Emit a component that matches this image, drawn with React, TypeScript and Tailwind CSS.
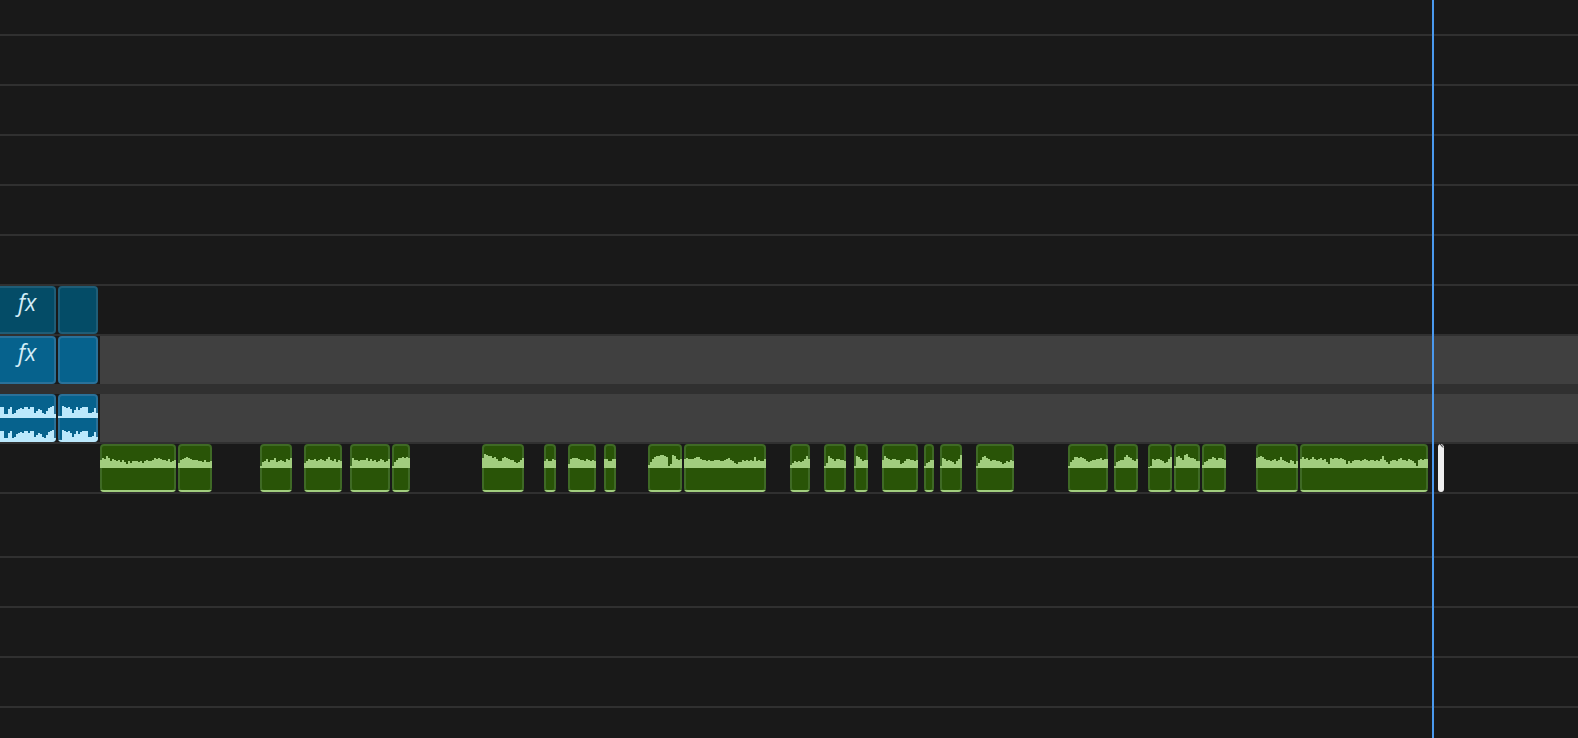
import clsx from "clsx";

type Clip = { start: number; end: number; wave?: string; fx?: boolean };
type Tone = "teal" | "blue" | "green";

// wave: one hex digit per 2px column, the digit is the column height
const VIDEO_CLIPS: Clip[] = [
  { start: 0, end: 56, fx: true },
  { start: 58, end: 98 },
];

const DIALOG_CLIPS: Clip[] = [
  { start: 0, end: 56, wave: "bb449b4589a9bb9bb5798547abc4" },
  { start: 58, end: 98, wave: "22cbab958b8abbb556a5" },
];

const MUSIC_CLIPS: Clip[] = [
  { start: 100, end: 176, wave: "8a9ca7987868647577767578778a9a98879678" },
  { start: 178, end: 212, wave: "589aba98887768667" },
  { start: 260, end: 292, wave: "2679688a6787698a" },
  { start: 304, end: 342, wave: "579889789879b879687" },
  { start: 350, end: 390, wave: "2a887888a79786798679" },
  { start: 392, end: 410, wave: "268aababa" },
  { start: 482, end: 524, wave: "aedccab977aba9886568a" },
  { start: 544, end: 556, wave: "797798" },
  { start: 568, end: 596, wave: "49aaa988798787" },
  { start: 604, end: 616, wave: "997799" },
  { start: 648, end: 682, wave: "369bccddcb24dc989" },
  { start: 684, end: 766, wave: "9a999abb98878778887789a875466878787b78779" },
  { start: 790, end: 810, wave: "35767679c9" },
  { start: 824, end: 846, wave: "25ca9799887" },
  { start: 854, end: 868, wave: "2cb9788" },
  { start: 882, end: 918, wave: "8ca989988457998878" },
  { start: 924, end: 934, wave: "25688" },
  { start: 940, end: 962, wave: "2a97876479d" },
  { start: 976, end: 1014, wave: "258bca9788776457687" },
  { start: 1068, end: 1108, wave: "268bbaba97678899a899" },
  { start: 1114, end: 1138, wave: "26788bdba879" },
  { start: 1148, end: 1172, wave: "12989987569b" },
  { start: 1174, end: 1200, wave: "2bca8debaa977" },
  { start: 1202, end: 1226, wave: "36799ba8aa98" },
  { start: 1256, end: 1298, wave: "abcb98878978b87658747" },
  { start: 1300, end: 1428, wave: "9b9a89b989a8964a9aa9a98475788878987887879c86478879a8879875289899" },
];

const TONES: Record<Tone, string> = {
  teal: "bg-[#044c67] border-[#1f5d77]",
  blue: "bg-[#06628d] border-[#2a7199]",
  green: "bg-[#295407] border-[#3f6a25]",
};

function Waveform({ wave, width, stereo }: { wave: string; width: number; stereo: boolean }) {
  const levels = wave.split("").map((c) => parseInt(c, 16));
  const channel = (base: number) =>
    `M0 ${base}` + levels.map((h, i) => `V${base - h}H${(i + 1) * 2}`).join("") + `V${base}Z`;

  return (
    <svg
      width={width}
      height={48}
      viewBox={`0 0 ${width} 48`}
      shapeRendering="crispEdges"
      className={clsx("absolute -top-0.5 -left-0.5", stereo ? "fill-[#bbe8fc]" : "fill-[#a1cd7e]")}
    >
      <path d={channel(24)} />
      {stereo ? <path d={channel(48)} /> : <rect y={46} width={width} height={2} />}
    </svg>
  );
}

function ClipBlock({ clip, tone, gap }: { clip: Clip; tone: Tone; gap: number }) {
  const width = clip.end - clip.start;
  return (
    <div
      className={clsx(
        "relative h-12 shrink-0 overflow-clip [overflow-clip-margin:border-box] border-2",
        clip.start === 0 ? "rounded-r border-l-0" : "rounded",
        TONES[tone]
      )}
      style={{ width, marginLeft: gap }}
    >
      {clip.fx && (
        <span className="block pl-[18px] pt-0.5 font-['Open_Sans',sans-serif] text-[23px] leading-6 font-medium italic text-[#d3edf8]">
          fx
        </span>
      )}
      {clip.wave && (
        <div className={clsx("absolute top-0", clip.start === 0 ? "left-0.5" : "left-0")}>
          <Waveform wave={clip.wave} width={width} stereo={tone === "blue"} />
        </div>
      )}
    </div>
  );
}

function ClipRow({ clips, tone }: { clips: Clip[]; tone: Tone }) {
  return (
    <div className="flex">
      {clips.map((clip, i) => (
        <ClipBlock
          key={clip.start}
          clip={clip}
          tone={tone}
          gap={clip.start - (i > 0 ? clips[i - 1].end : 0)}
        />
      ))}
    </div>
  );
}

function EmptyTrack({ className = "h-[50px]" }: { className?: string }) {
  return <div className={clsx("shrink-0 border-b-2 border-[#303030]", className)} />;
}

export default function App() {
  return (
    <main className="relative flex h-screen flex-col overflow-hidden bg-[#191919]">
      <EmptyTrack className="h-9" />
      <EmptyTrack />
      <EmptyTrack />
      <EmptyTrack />
      <EmptyTrack />
      <EmptyTrack />

      <section className="shrink-0 border-b-2 border-[#303030]">
        <ClipRow clips={VIDEO_CLIPS} tone="teal" />
      </section>

      <section className="flex shrink-0">
        <ClipRow clips={VIDEO_CLIPS} tone="blue" />
        <div className="ml-0.5 flex-1 bg-[#404040]" />
      </section>

      <div className="h-2.5 shrink-0 bg-[#303030]" />

      <section className="flex shrink-0 border-b-2 border-[#303030]">
        <ClipRow clips={DIALOG_CLIPS} tone="blue" />
        <div className="ml-0.5 flex-1 bg-[#404040]" />
      </section>

      <section className="flex shrink-0 border-b-2 border-[#303030]">
        <ClipRow clips={MUSIC_CLIPS} tone="green" />
        {/* selected clip, too short to show its waveform */}
        <div className="ml-2.5 h-12 w-1.5 shrink-0 overflow-hidden rounded-sm bg-[#efefef]">
          <svg width="6" height="4" viewBox="0 0 6 4" className="block">
            <path d="M2 0L5 3.5M3.5 0L6 2" stroke="#222222" strokeWidth="1" fill="none" />
          </svg>
        </div>
      </section>

      <EmptyTrack className="h-16" />
      <EmptyTrack />
      <EmptyTrack />
      <EmptyTrack />

      {/* playhead */}
      <div className="absolute inset-y-0 left-[1432px] w-0.5 bg-[#4a99ee]" />
    </main>
  );
}
